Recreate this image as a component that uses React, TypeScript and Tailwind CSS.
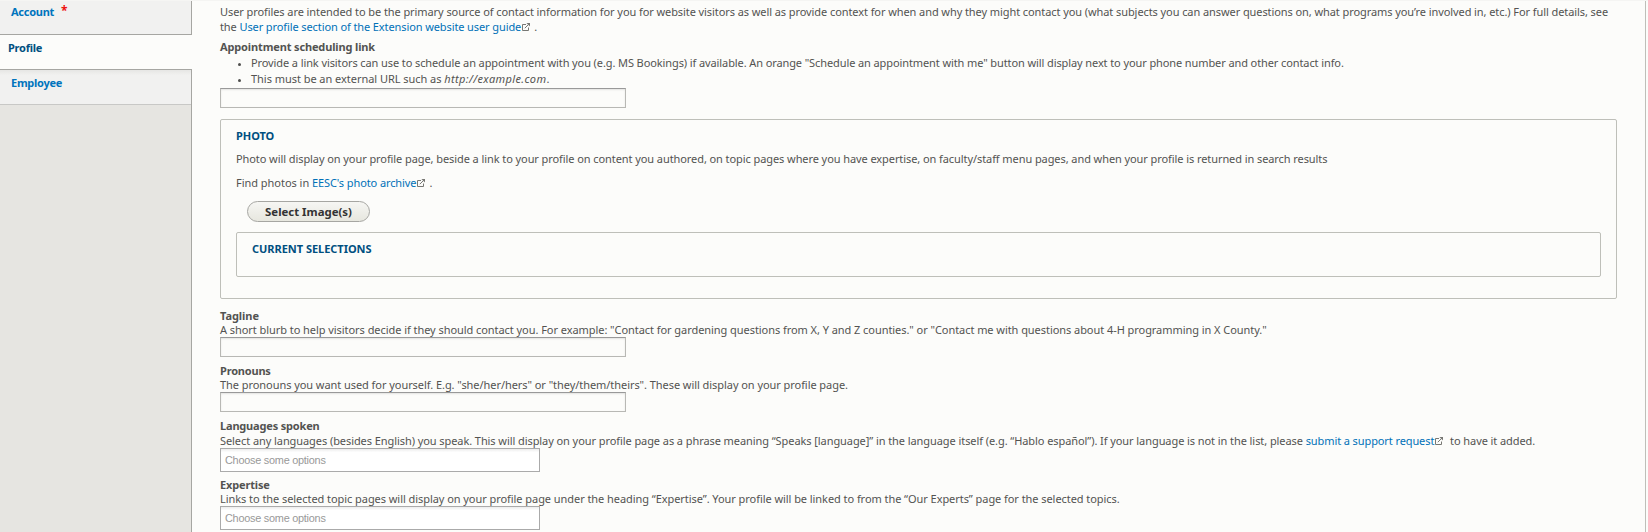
import type { ReactNode } from "react";

function ExternalLink({ children, className }: { children: ReactNode; className: string }) {
  return (
    <>
      <a href="#" className={`text-[#0071b8] ${className}`}>{children}</a>
      <svg className="mr-[4px] inline-block h-[8px] w-[9px] align-baseline" viewBox="0 0 9 8" fill="none" stroke="#777773">
        <path d="M5 1.5H1.5V7.5H7.5V4.5" />
        <path d="M3.8 5.2L7.6 1.4" />
        <path d="M5.4 0H9V3.6Z" fill="#777773" stroke="none" />
      </svg>
    </>
  );
}

function TextInput() {
  return (
    <input
      type="text"
      className="block h-[20px] w-[406px] border border-[#b8b8b4] border-t-[#999] bg-[#fcfcfa] shadow-[inset_0_1px_2px_rgba(0,0,0,0.1)] outline-none"
    />
  );
}

function ChoiceBox() {
  return (
    <div className="h-[24px] w-[320px] border border-[#aaa] bg-white bg-linear-to-b from-[#eee] from-[1%] to-white to-[15%] pl-[4px] font-['Liberation_Sans',sans-serif] text-[10.9px] leading-[22px] tracking-[-0.25px] whitespace-nowrap text-[#999]">
      Choose some options
    </div>
  );
}

function Label({ children, className = "" }: { children: ReactNode; className?: string }) {
  return <div className={`font-bold whitespace-nowrap ${className}`}>{children}</div>;
}

function Bullet({ children, className }: { children: ReactNode; className: string }) {
  return (
    <li className={`flex gap-[10px] pl-[18px] ${className}`}>
      <span className="mt-[8px] h-[3px] w-[3px] shrink-0 rounded-full bg-[#4f4f4d]" />
      <span>{children}</span>
    </li>
  );
}

export default function App() {
  return (
    <div className="flex h-[532px] w-[1648px] overflow-hidden border-t border-[#f5f5f3] bg-[#fcfcfa] font-['Noto_Sans',sans-serif] text-[11px] leading-[15px] text-[#535351]">
      <nav className="flex w-[192px] shrink-0 flex-col font-bold text-[#0074bd]">
        <a href="#" className="flex h-[34px] border-r border-b border-[#a6a6a2] bg-[#f1f1f0] pt-[3px] pl-[11px] tracking-[-0.27px]">
          Account <span className="relative -top-[1px] ml-[7px] text-[12px] font-bold text-[#e11]">*</span>
        </a>
        <a href="#" className="h-[34px] bg-[#fcfcfa] pt-[5px] pl-[8px] tracking-[-0.25px] text-[#004f80]">Profile</a>
        <div className="flex grow flex-col border-t border-r border-[#a6a6a2] bg-[#e6e5e1]">
          <a href="#" className="h-[35px] border-b border-[#c8c8c6] bg-[#f1f1f0] bg-linear-to-b from-[#e6e6e4] to-[#f1f1f0] to-[15%] pt-[5px] pl-[11px] tracking-[-0.27px]">
            Employee
          </a>
        </div>
      </nav>

      <main className="flex w-[1454px] flex-col border-r border-[#bebfb9] pt-[3px] pl-[28px]">
        <p className="whitespace-nowrap tracking-[-0.08px]">
          User profiles are intended to be the primary source of contact information for you for website visitors as well as provide context for when and why they might contact you (what subjects you can answer questions on, what programs you’re involved in, etc.) For full details, see
        </p>
        <p className="whitespace-nowrap tracking-[-0.1px]">
          the <ExternalLink className="tracking-[-0.1px]">User profile section of the Extension website user guide</ExternalLink>.
        </p>

        <Label className="mt-[5px] tracking-[-0.139px]">Appointment scheduling link</Label>
        <ul className="mt-px flex flex-col gap-px whitespace-nowrap">
          <Bullet className="tracking-[-0.1px]">
            Provide a link visitors can use to schedule an appointment with you (e.g. MS Bookings) if available. An orange "Schedule an appointment with me" button will display next to your phone number and other contact info.
          </Bullet>
          <Bullet className="tracking-[-0.04px]">
            This must be an external URL such as <em className="tracking-[0.36px]">http://example.com</em>.
          </Bullet>
        </ul>
        <div className="mt-[2px]"><TextInput /></div>

        <section className="mt-[11px] h-[180px] w-[1397px] rounded-[2px] border border-[#bebfb9] px-[15px] pt-[8px]">
          <h2 className="font-bold tracking-[-0.03px] text-[#004f80]">PHOTO</h2>
          <p className="mt-[8px] whitespace-nowrap tracking-[-0.079px]">
            Photo will display on your profile page, beside a link to your profile on content you authored, on topic pages where you have expertise, on faculty/staff menu pages, and when your profile is returned in search results
          </p>
          <p className="mt-[9px] whitespace-nowrap tracking-[-0.03px]">
            Find photos in <ExternalLink className="tracking-[-0.1px]">EESC's photo archive</ExternalLink>.
          </p>
          <button className="mt-[11px] ml-[11px] block h-[21px] w-[123px] rounded-full border border-[#a6a6a2] bg-linear-to-b from-[#f6f6f3] to-[#e7e7df] text-center text-[11.4px] leading-[18px] font-bold whitespace-nowrap text-[#333]">
            Select Image(s)
          </button>
          <section className="mt-[10px] h-[45px] rounded-[2px] border border-[#bebfb9] px-[15px] pt-[8px]">
            <h3 className="font-bold tracking-[-0.03px] text-[#004f80]">CURRENT SELECTIONS</h3>
          </section>
        </section>

        <Label className="mt-[9px] h-[14px] tracking-[-0.05px]">Tagline</Label>
        <p className="whitespace-nowrap tracking-[-0.055px]">
          A short blurb to help visitors decide if they should contact you. For example: "Contact for gardening questions from X, Y and Z counties." or "Contact me with questions about 4-H programming in X County."
        </p>
        <TextInput />

        <Label className="mt-[6px] h-[14px] tracking-[-0.2px]">Pronouns</Label>
        <p className="whitespace-nowrap tracking-[-0.057px]">
          The pronouns you want used for yourself. E.g. "she/her/hers" or "they/them/theirs". These will display on your profile page.
        </p>
        <TextInput />

        <Label className="mt-[6px] tracking-[-0.18px]">Languages spoken</Label>
        <p className="whitespace-nowrap tracking-[-0.074px]">
          Select any languages (besides English) you speak. This will display on your profile page as a phrase meaning “Speaks [language]” in the language itself (e.g. “Hablo español”). If your language is not in the list, please <ExternalLink className="tracking-[-0.1px]">submit a support request</ExternalLink> to have it added.
        </p>
        <ChoiceBox />

        <Label className="mt-[5px] h-[14px] tracking-[-0.15px]">Expertise</Label>
        <p className="whitespace-nowrap tracking-[-0.057px]">
          Links to the selected topic pages will display on your profile page under the heading “Expertise”. Your profile will be linked to from the “Our Experts” page for the selected topics.
        </p>
        <ChoiceBox />
      </main>
    </div>
  );
}
